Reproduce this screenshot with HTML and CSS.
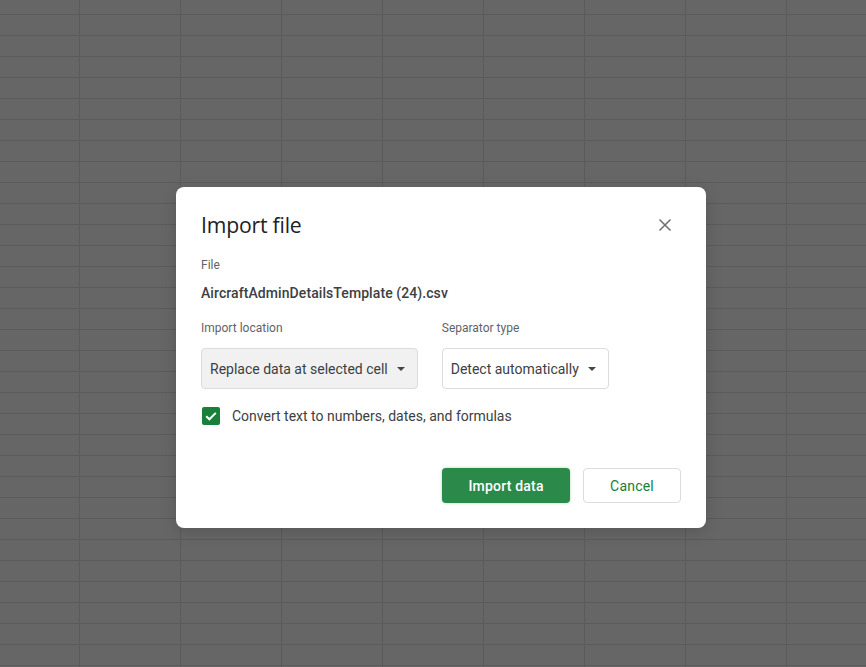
FILE: index.html
```html
<!DOCTYPE html>
<html lang="en">
<head>
<meta charset="utf-8">
<title>Import file</title>
<link rel="stylesheet" href="styles.css">
</head>
<body>
<div class="sheet">
  <div class="dialog" role="dialog" aria-label="Import file">
    <div class="header">
      <h1 class="title">Import file</h1>
      <button class="close" aria-label="Close">
        <svg width="14" height="14" viewBox="0 0 14 14"><path d="M1.5 1.5 L12.5 12.5 M12.5 1.5 L1.5 12.5" stroke="#6b6e72" stroke-width="1.5" fill="none"/></svg>
      </button>
    </div>
    <div class="label file-label">File</div>
    <div class="filename">AircraftAdminDetailsTemplate (24).csv</div>
    <div class="options">
      <div class="field">
        <div class="label">Import location</div>
        <div class="select select-grey">
          <span>Replace data at selected cell</span>
          <span class="caret"></span>
        </div>
      </div>
      <div class="field">
        <div class="label">Separator type</div>
        <div class="select">
          <span>Detect automatically</span>
          <span class="caret"></span>
        </div>
      </div>
    </div>
    <label class="check-row">
      <span class="checkbox">
        <svg width="18" height="18" viewBox="0 0 18 18"><path d="M4.2 9.2 L7.4 12.3 L13.8 5.9" stroke="#fff" stroke-width="2" fill="none"/></svg>
      </span>
      <span>Convert text to numbers, dates, and formulas</span>
    </label>
    <div class="actions">
      <button class="btn btn-primary">Import data</button>
      <button class="btn btn-secondary">Cancel</button>
    </div>
  </div>
</div>
</body>
</html>
```
FILE: styles.css
```css
* { box-sizing: border-box; }
html, body { margin: 0; padding: 0; }
body {
  width: 866px;
  height: 667px;
  overflow: hidden;
  font-family: Roboto, "Liberation Sans", Arial, sans-serif;
  background-color: #666666;
  background-image:
    linear-gradient(to right, #5b5b5b 1px, transparent 1px),
    linear-gradient(to bottom, #5b5b5b 1px, transparent 1px);
  background-size: 101px 21px, 101px 21px;
  background-position: 79px 0, 0 14px;
}
.sheet {
  padding: 187px 0 0 176px;
}
.dialog {
  width: 530px;
  height: 341px;
  background: #fff;
  border-radius: 8px;
  padding: 24px 25px 25px 25px;
  box-shadow: 0 4px 16px rgba(0,0,0,0.15);
}
.header {
  display: flex;
  align-items: center;
  justify-content: space-between;
  height: 28px;
}
.title {
  margin: 0;
  font-family: "Open Sans", Roboto, sans-serif;
  font-weight: 400;
  font-size: 21.2px;
  line-height: 28px;
  color: #202124;
  letter-spacing: -0.2px;
}
.close {
  border: 0;
  background: none;
  padding: 0;
  width: 14px;
  height: 14px;
  margin-right: 9px;
  display: flex;
}
.label {
  font-size: 12px;
  line-height: 16px;
  color: #5f6368;
}
.file-label { margin-top: 18px; }
.filename {
  margin-top: 10px;
  font-size: 14px;
  line-height: 20px;
  font-weight: 500;
  letter-spacing: 0.08px;
  color: #3c4043;
}
.options {
  display: flex;
  gap: 24px;
  margin-top: 17px;
}
.field .label { margin-bottom: 12px; }
.select {
  height: 41px;
  display: inline-flex;
  align-items: center;
  gap: 9px;
  padding: 0 12px 0 8px;
  border: 1px solid #dadce0;
  border-radius: 4px;
  font-size: 14px;
  color: #3c4043;
  background: #fff;
}
.select-grey { background: #f1f1f1; }
.caret {
  width: 0;
  height: 0;
  border-left: 4px solid transparent;
  border-right: 4px solid transparent;
  border-top: 4px solid #444746;
  margin-top: 1px;
}
.check-row {
  display: flex;
  align-items: center;
  gap: 12px;
  margin-top: 17px;
  padding-left: 1px;
  height: 20px;
  font-size: 14px;
  color: #3c4043;
}
.checkbox {
  width: 18px;
  height: 18px;
  border-radius: 2px;
  background: #188038;
  display: flex;
}
.actions {
  display: flex;
  justify-content: flex-end;
  gap: 13px;
  margin-top: 42px;
}
.btn {
  height: 35px;
  border-radius: 4px;
  font-family: Roboto, "Liberation Sans", sans-serif;
  font-size: 14px;
  font-weight: 500;
  letter-spacing: 0.2px;
  cursor: pointer;
}
.btn-primary {
  width: 128px;
  background: #2b8a4a;
  color: #fff;
  border: 0;
  box-shadow: 0 0 3px rgba(24,128,56,0.35);
}
.btn-secondary {
  width: 98px;
  background: #fff;
  color: #188038;
  border: 1px solid #dadce0;
  font-weight: 400;
}
```
